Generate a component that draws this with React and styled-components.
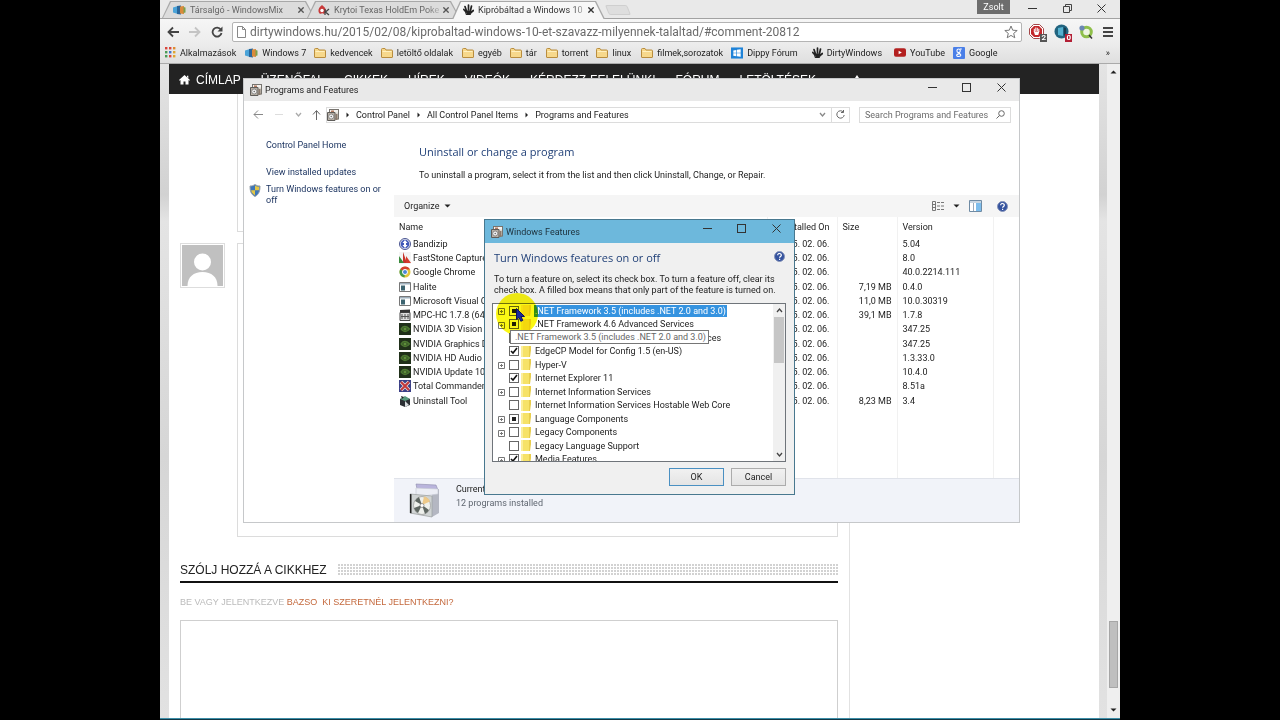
import React from "react";
import { createGlobalStyle, styled } from "styled-components";

const GlobalStyle = createGlobalStyle`
  * { box-sizing: border-box; }
  body {
    margin: 0;
    background: #000;
    font-family: Roboto, "Liberation Sans", sans-serif;
    font-size: 9px;
    line-height: 12px;
    color: #222;
  }
  button, input, textarea { font: inherit; color: inherit; margin: 0; padding: 0; }
  button { border: 0; background: none; }
  a { color: inherit; text-decoration: none; }
  h1, h2, p { margin: 0; font-weight: normal; }
  svg { display: block; flex: none; }
`;

const Screen = styled.div`
  position: relative;
  display: flex;
  flex-direction: column;
  width: 75%;
  height: 100vh;
  margin: 0 auto;
  overflow: hidden;
  background: #fff;
`;

/* ---------- browser ---------- */

const TabStrip = styled.div`
  display: flex;
  height: 19px;
  padding: 1px 0 0 2px;
  background: #e9e9e9;
  border-bottom: 1px solid #a2a2a2;
`;

const Tab = styled.div`
  position: relative;
  z-index: ${(p) => (p.$active ? 2 : 1)};
  display: flex;
  align-items: center;
  width: 153px;
  height: ${(p) => (p.$active ? 18 : 17)}px;
  margin-right: -8px;
  padding: 0 9px 0 11px;
  font-size: 9px;
  color: ${(p) => (p.$active ? "#333" : "#666")};

  &::before, &::after {
    content: "";
    position: absolute;
    inset: 0;
    z-index: -1;
    background: #a8a8a8;
    clip-path: polygon(0 100%, 8px 0, calc(100% - 9px) 0, 100% 100%);
  }
  &::after {
    inset: 1px 1px ${(p) => (p.$active ? -1 : 0)}px 1px;
    background: ${(p) => (p.$active ? "#f7f7f7" : "#dcdcdc")};
  }
`;

const TabTitle = styled.span`
  flex: 1;
  min-width: 0;
  margin-left: 4px;
  overflow: hidden;
  white-space: nowrap;
  mask-image: linear-gradient(90deg, #000 88%, rgba(0, 0, 0, 0.3));
`;

const TabClose = styled.button`
  display: flex;
  margin-left: 4px;
  margin-right: 2px;
`;

const NewTab = styled.button`
  width: 22px;
  height: 10px;
  margin: 4px 0 0 10px;
  background: #dedede;
  border: 1px solid #cfcfcf;
  border-radius: 2px;
  transform: skewX(22deg);
`;

const TabStripEnd = styled.div`
  display: flex;
  align-items: flex-start;
  margin-left: auto;
  margin-top: -1px;
`;

const UserButton = styled.button`
  width: 33px;
  height: 14px;
  margin-right: 18px;
  background: #6d6d6d;
  color: #fff;
`;

const CaptionButton = styled.button`
  display: flex;
  align-items: center;
  align-self: flex-start;
  justify-content: center;
  width: ${(p) => p.$w || 35}px;
  height: 16px;
`;

const Toolbar = styled.div`
  display: flex;
  align-items: center;
  height: 25px;
  padding: 0 7px;
  gap: 10px;
  background: linear-gradient(#f6f6f6, #ececec);
`;

const IconButton = styled.button`
  display: flex;
`;

const Omnibox = styled.div`
  display: flex;
  flex: 1;
  align-items: center;
  height: 20px;
  margin-left: -1px;
  margin-right: -3px;
  padding: 0 3px 0 4px;
  background: #fff;
  border: 1px solid #b4b4b4;
  border-radius: 2px;
`;

const UrlInput = styled.input`
  flex: 1;
  min-width: 0;
  margin-left: 4px;
  border: 0;
  outline: 0;
  background: none;
  font-size: 12px;
  color: #6a6a6a;
`;

const Bookmarks = styled.nav`
  display: flex;
  align-items: center;
  height: 20px;
  padding: 0 10px 2px 5px;
  background: linear-gradient(#ececec, #dfdfdf);
  border-bottom: 1px solid #aaa;
`;

const Bookmark = styled.a`
  display: flex;
  align-items: center;
  gap: 4px;
  margin-right: ${(p) => p.$gap || 8}px;
  white-space: nowrap;
`;

const More = styled.button`
  margin-left: auto;
`;

const Viewport = styled.div`
  display: flex;
  flex: 1;
  min-height: 0;
  background: linear-gradient(#e4e4e4, #d2d2d2 20%, #e4e4e4 24%, #d6d6d6 60%, #e2e2e2);
`;

const Site = styled.main`
  display: flex;
  flex: 1;
  flex-direction: column;
  min-width: 0;
  margin: 0 8px 0 9px;
  background: #fff;
  font-family: "Liberation Sans", Arial, sans-serif;
`;

const SiteNav = styled.nav`
  display: flex;
  align-items: center;
  gap: 20px;
  height: 30px;
  padding: 2px 11px 0 10px;
  background: #232323;
  color: #fff;
  font-size: 12px;
  white-space: nowrap;
  a { display: flex; align-items: center; gap: 6px; }
`;

const SiteBody = styled.div`
  display: flex;
  flex: 1;
`;

const Article = styled.div`
  display: flex;
  flex-direction: column;
  width: 681px;
  padding: 0 11px;
  border-right: 1px solid #e2e2e2;
`;

const Comment = styled.section`
  display: flex;
  gap: 12px;
  margin-bottom: ${(p) => p.$after || 0}px;
`;

const AvatarSpace = styled.div`
  width: 45px;
`;

const Avatar = styled.div`
  width: 45px;
  height: 45px;
  padding: 1px;
  border: 1px solid #ddd;
`;

const CommentBox = styled.div`
  flex: 1;
  height: ${(p) => p.$h}px;
  border: 1px solid #dcdcdc;
  border-top-width: ${(p) => (p.$open ? 0 : 1)}px;
`;

const SectionTitle = styled.h2`
  display: flex;
  align-items: center;
  gap: 11px;
  height: 25px;
  margin-top: 21px;
  border-bottom: 2px solid #111;
  font-size: 12px;
  color: #222;
`;

const Dots = styled.span`
  flex: 1;
  height: 11px;
  background: radial-gradient(circle at 1px 1px, #d2d2d2 1px, transparent 1px) 0 0 / 3px 3px;
`;

const LoginLine = styled.p`
  margin: 13px 0 12px;
  color: #bbb;
  a { color: #c4683c; }
`;

const ReplyField = styled.textarea`
  flex: 1;
  border: 1px solid #cfcfcf;
  border-bottom: 0;
  resize: none;
  outline: 0;
`;

const Scrollbar = styled.div`
  display: flex;
  flex-direction: column;
  align-items: center;
  justify-content: space-between;
  width: 13px;
  padding: 4px 0;
  background: #efefef;
`;

const Thumb = styled.div`
  width: 9px;
  height: 67px;
  margin-bottom: 18px;
  margin-top: auto;
  background: #bfbfbf;
  border: 1px solid #a6a6a6;
`;

const Taskbar = styled.div`
  height: 2px;
  background: #123644;
  border-top: 1px solid #3c8ea8;
`;

/* ---------- control panel window ---------- */

const Window = styled.section`
  position: absolute;
  left: 83px;
  top: 78px;
  display: flex;
  flex-direction: column;
  width: 777px;
  height: 445px;
  background: #fff;
  border: 1px solid #c6c8ca;
`;

const TitleBar = styled.header`
  display: flex;
  align-items: center;
  gap: 3px;
  height: 22px;
  padding-left: 6px;
  background: #e9e9e9;
  h1 { flex: 1; font-size: 9px; }
`;

const TitleButtons = styled.div`
  display: flex;
  align-self: flex-start;
  padding-right: ${(p) => p.$end || 0}px;
`;

const AddressRow = styled.div`
  display: flex;
  align-items: center;
  gap: 9px;
  height: 27px;
  padding: 0 8px 0 9px;
`;

const HistoryButtons = styled.div`
  display: flex;
  align-items: center;
  gap: 10px;
  width: 67px;
`;

const AddressBar = styled.div`
  display: flex;
  flex: 1;
  align-items: center;
  gap: 5px;
  height: 16px;
  margin-left: -3px;
  border: 1px solid #dcdcdc;
`;

const Crumb = styled.span`
  margin-right: ${(p) => (p.$last ? "auto" : 0)};
`;

const Refresh = styled.button`
  display: flex;
  align-items: center;
  justify-content: center;
  width: 18px;
  height: 14px;
  border-left: 1px solid #dcdcdc;
`;

const Search = styled.label`
  display: flex;
  align-items: center;
  width: 152px;
  height: 16px;
  padding: 0 5px;
  border: 1px solid #dcdcdc;
  input {
    flex: 1;
    min-width: 0;
    border: 0;
    outline: 0;
  }
  input::placeholder { color: #6b6b6b; opacity: 1; }
`;

const WindowBody = styled.div`
  display: flex;
  flex: 1;
  min-height: 0;
`;

const SidePanel = styled.aside`
  display: flex;
  flex-direction: column;
  width: 150px;
  padding: 12px 12px 0 5px;
  color: #1d3561;
`;

const SideLink = styled.a`
  display: flex;
  gap: 5px;
  min-height: 12px;
  margin-bottom: ${(p) => p.$after || 0}px;
  padding-left: ${(p) => (p.$icon ? 0 : 17)}px;
  line-height: 11px;
`;

const MainPanel = styled.div`
  display: flex;
  flex: 1;
  flex-direction: column;
  min-width: 0;
`;

const Intro = styled.div`
  height: 67px;
  padding: 17px 25px 0;
  p { margin-top: 10px; }
`;

const Heading = styled.h2`
  font-family: "Open Sans", sans-serif;
  font-size: 11px;
  line-height: 14px;
  color: #1f3f77;
`;

const CommandBar = styled.div`
  display: flex;
  align-items: center;
  height: 22px;
  padding: 0 11px 0 10px;
  background: #f5f5f5;
`;

const Organize = styled.button`
  display: flex;
  align-items: center;
  gap: 5px;
  margin-right: auto;
`;

const ViewButtons = styled.div`
  display: flex;
  align-items: center;
  gap: 9px;
`;

const HelpButton = styled(IconButton)`
  margin-left: 6px;
`;

const ListArea = styled.div`
  flex: 1;
  min-height: 0;
`;

const Programs = styled.table`
  width: 100%;
  height: 100%;
  border-collapse: collapse;
  table-layout: fixed;
  white-space: nowrap;

  th, td {
    padding: 0 5px;
    border-right: 1px solid #f1f1f1;
    font-weight: normal;
    text-align: left;
    overflow: hidden;
  }
  th:last-child, td:last-child { border-right: 0; }
  thead tr { height: 20px; }
  th:nth-child(2), td:nth-child(2) { text-align: right; padding-right: 7px; }
  td:nth-child(3) { text-align: right; }
`;

const Column = styled.col`
  width: ${(p) => p.$w}px;
`;

const ProgramRow = styled.tr`
  height: 14px;
  &:nth-child(4n) { height: 15px; }
`;

const ProgramName = styled.span`
  display: flex;
  align-items: center;
  gap: 2px;
`;

const StatusBar = styled.footer`
  display: flex;
  gap: 11px;
  height: 44px;
  padding: 4px 14px;
  background: #f1f3f9;
  border-top: 1px solid #e0e3ea;
  p { margin-bottom: 2px; }
  p + p { color: #5f6670; }
`;

/* ---------- features dialog ---------- */

const Dialog = styled.section`
  position: absolute;
  left: 324px;
  top: 219px;
  width: 311px;
  height: 276px;
  display: flex;
  flex-direction: column;
  background: #f0f0f0;
  border: 1px solid #48788f;
`;

const DialogTitle = styled(TitleBar)`
  height: 23px;
  background: #6db8dc;
  color: #1c2f3a;
`;

const DialogBody = styled.div`
  display: flex;
  flex: 1;
  flex-direction: column;
  padding: 8px 8px 8px 7px;
`;

const DialogHead = styled.div`
  display: flex;
  justify-content: space-between;
  padding: 0 1px 0 2px;
`;

const Hint = styled.p`
  padding: 9px 0 0 2px;
  line-height: 11px;
`;

const FeatureBox = styled.div`
  display: flex;
  height: 159px;
  margin-top: 7px;
  overflow: hidden;
  background: #fff;
  border: 1px solid #6f747a;
`;

const FeatureList = styled.ul`
  flex: 1;
  display: grid;
  grid-template-rows: repeat(12, 1fr);
  height: 162px;
  margin: 0;
  padding: 0 0 0 4px;
  list-style: none;
`;

const Feature = styled.li`
  display: grid;
  grid-template-columns: 12px 12px 1fr;
  align-items: center;
`;

const Expander = styled.button`
  display: flex;
  width: 7px;
  margin-left: 1px;
  margin-top: 2px;
`;

const CheckBox = styled.input`
  appearance: none;
  width: 10px;
  height: 10px;
  background: ${(p) => (p.$partial ? "linear-gradient(#222, #222) center / 4px 4px no-repeat #fff" : "#fff")};
  border: 1px solid #666;
  &:checked {
    background: url("data:image/svg+xml,%3Csvg xmlns='http://www.w3.org/2000/svg' viewBox='0 0 8 8'%3E%3Cpath d='M1 4l2 2 4-5' fill='none' stroke='%23111' stroke-width='1.6'/%3E%3C/svg%3E") #fff;
  }
`;

const FeatureLabel = styled.label`
  display: flex;
  align-items: center;
  gap: 3px;
  white-space: nowrap;
`;

const FeatureText = styled.span`
  padding: 0 1px;
  background: ${(p) => (p.$selected ? "#3593e0" : "none")};
  color: ${(p) => (p.$selected ? "#fff" : "#222")};
`;

const MiniScroll = styled.div`
  display: flex;
  flex-direction: column;
  align-items: center;
  width: 12px;
  padding: 3px 0;
  background: #f0f0f0;
  &::before {
    content: "";
    order: 1;
    width: 10px;
    height: 46px;
    margin-top: 3px;
    background: #c6c6c6;
  }
  svg:last-child { order: 2; margin-top: auto; }
`;

const DialogButtons = styled.div`
  display: flex;
  justify-content: flex-end;
  gap: 7px;
  margin-top: 6px;
`;

const PushButton = styled.button`
  width: 55px;
  height: 18px;
  background: linear-gradient(#f1f1f1, #e4e4e4);
  border: 1px solid ${(p) => (p.$main ? "#4a90c2" : "#acacac")};
`;

const ClickHalo = styled.div`
  position: absolute;
  left: 336px;
  top: 293px;
  width: 42px;
  height: 42px;
  border-radius: 50%;
  background: #fbf714;
  mix-blend-mode: multiply;
  pointer-events: none;
`;

const Tooltip = styled.div`
  position: absolute;
  left: 350px;
  top: 330px;
  padding: 0 2px 0 4px;
  background: #fff;
  border: 1px solid #767676;
  color: #666;
  white-space: nowrap;
`;

const Pointer = styled.svg`
  position: absolute;
  left: 356px;
  top: 308px;
`;

/* ---------- icons ---------- */

const Cross = ({ size = 9, width = 1, color = "#333" }) => (
  <svg width={size} height={size} viewBox="0 0 9 9">
    <path d="M.5.5l8 8M8.5.5l-8 8" stroke={color} strokeWidth={width} />
  </svg>
);

const Minimize = () => (
  <svg width="9" height="9" viewBox="0 0 9 9"><path d="M0 4.500h9" stroke="#333" /></svg>
);

const Maximize = () => (
  <svg width="9" height="9" viewBox="0 0 9 9"><rect x=".5" y=".5" width="8" height="8" fill="none" stroke="#333" /></svg>
);

const Restore = () => (
  <svg width="9" height="9" viewBox="0 0 9 9" fill="none" stroke="#444">
    <path d="M.5 2.500h6v6h-6zM2.500 2.500v-2h6v6h-2" />
  </svg>
);

const Chevron = ({ up, color = "#444", size = 7 }) => (
  <svg width={size} height={size} viewBox="0 0 7 7">
    <path d={up ? "M1 5l2.500-3L6 5" : "M1 2l2.500 3L6 2"} fill="none" stroke={color} strokeWidth="1.300" />
  </svg>
);

const Triangle = ({ dir = "down", color = "#222" }) => {
  const shapes = { down: "M.5 2.500h6L3.500 5.500z", up: "M.5 5.500h6L3.500 2.500z", right: "M2.500 1.500v5l2.500-2.500z" };
  return <svg width="7" height="8" viewBox="0 0 7 8"><path d={shapes[dir]} fill={color} /></svg>;
};

const Folder = () => (
  <svg width="12" height="10" viewBox="0 0 12 10">
    <path d="M.5 9V1.500Q.5.5 1.500.5H4l1 1.500h5.500q1 0 1 1V9q0 .5-.5.5H1Q.5 9.500.5 9z" fill="#f7d88b" stroke="#b98d3e" />
    <path d="M1.500 3.500h9" stroke="#fff0bf" />
  </svg>
);

const Apps = () => (
  <svg width="11" height="11" viewBox="0 0 11 11">
    {["#d9453b", "#d9453b", "#e08b30", "#4a9b56", "#3f74c9", "#e0a530", "#4a9b56", "#d9453b", "#e0a530"].map((c, i) => (
      <rect key={i} x={(i % 3) * 4} y={Math.floor(i / 3) * 4} width="2.400" height="2.400" fill={c} />
    ))}
  </svg>
);

const WinMix = () => (
  <svg width="13" height="10" viewBox="0 0 13 10">
    <path d="M0 2.500L5 1v8L0 7.500z" fill="#4aa3d8" />
    <path d="M4 1l4-.5v9L4 9z" fill="#29659a" />
    <path d="M7 1.500l4-.5v8l-4-.5z" fill="#d98a3c" />
    <path d="M10.500 2l2 .5v5l-2 .5z" fill="#7ca04b" />
  </svg>
);

const Hand = () => (
  <svg width="11" height="12" viewBox="0 0 11 12" fill="none" stroke="#222" strokeLinecap="round">
    <path d="M3.500 7L2 2.500M5.500 6V1M7.500 6.500L8.500 2M3 8L.8 5.500M8 8.500l2.400-2" strokeWidth="1.700" />
    <path d="M3 7h5l-.5 3.500h-4z" fill="#222" />
  </svg>
);

const PokerIcon = () => (
  <svg width="12" height="12" viewBox="0 0 12 12">
    <path d="M4 1C1.500 3 0 5 .5 7.500S3 10.500 4 9c1.500 1.500 4 .5 4-2S6.500 3 4 1z" fill="#c93a3a" />
    <circle cx="4" cy="6.500" r="1.700" fill="#fff" />
    <path d="M7 5v6M11 5L7.500 8 11 11" stroke="#444" strokeWidth="1.300" fill="none" />
  </svg>
);

const WinLogo = () => (
  <svg width="12" height="12" viewBox="0 0 13 12">
    <rect width="13" height="12" fill="#1f83d8" />
    <path d="M2.500 3.200l3.300-.5v3h-3.300zM6.500 2.600l4-.6v3.700h-4zM2.500 6.400h3.300v3l-3.300-.5zM6.500 6.400h4v3.700l-4-.6z" fill="#fff" />
  </svg>
);

const YouTube = () => (
  <svg width="12" height="9" viewBox="0 0 13 9">
    <rect width="13" height="9" rx="2" fill="#b3201f" /><path d="M5 2.500v4l3.500-2z" fill="#fff" />
  </svg>
);

const GoogleG = () => (
  <svg width="12" height="12" viewBox="0 0 12 12">
    <rect width="12" height="12" rx="1" fill="#4a7fe8" />
    <g fill="none" stroke="#fff" strokeWidth="1.100"><ellipse cx="5.600" cy="3.800" rx="1.700" ry="1.800" /><path d="M7 2h1.800M5.600 5.600c0 1 2.200 1 2.200 2.600S3.700 10 3.700 8.400 5.600 7 6.500 7.200" /></g>
  </svg>
);

const Badged = styled.span`
  position: relative;
  display: flex;
  width: 15px;
`;

const Badge = styled.span`
  position: absolute;
  right: -3px;
  bottom: -3px;
  padding: 0 1px;
  background: ${(p) => p.$bg};
  color: #fff;
  font-size: 8px;
  font-weight: bold;
  line-height: 8px;
`;

const ProgramsIcon = () => (
  <svg width="12" height="12" viewBox="0 0 12 12">
    <rect x="2.500" y=".5" width="9" height="9.500" fill="#d9d5ce" stroke="#77746f" />
    <path d="M3 1h8v2.500H3z" fill="#f4f2ee" />
    <path d="M4 2.200h3" stroke="#a05a3c" strokeWidth="1.200" />
    <path d="M.5 3.500h7.500v8H.5z" fill="#b9b1a6" stroke="#5f5d5a" />
    <circle cx="4.200" cy="7.500" r="2.500" fill="#f3f3f3" stroke="#777" strokeWidth=".8" />
    <circle cx="4.200" cy="7.500" r=".7" fill="#555" />
    <path d="M8.500 5h2v6h-2z" fill="#8b7a6c" />
  </svg>
);

const Shield = () => (
  <svg width="12" height="13" viewBox="0 0 12 13">
    <path d="M6 .5c1.500 1 3.300 1.500 5 1.500 0 5-1 8.500-5 10.500C2 10.500 1 7 1 2c1.700 0 3.500-.5 5-1.500z" fill="#3d76b8" stroke="#9aa1a9" />
    <path d="M6 1.500c1.200.8 2.700 1.200 4.200 1.300 0 1.300 0 2.500-.3 3.500H6zM6 6.300v5C3.500 10 2.500 8.500 2.100 6.300z" fill="#e3c646" />
  </svg>
);

const Help = () => (
  <svg width="11" height="11" viewBox="0 0 11 11">
    <circle cx="5.500" cy="5.500" r="5" fill="#34529e" stroke="#8593b8" />
    <path d="M3.700 4.200c0-2.400 3.700-2.200 3.600 0 0 1.300-1.700 1.200-1.700 2.600M5.600 7.800v1.200" fill="none" stroke="#fff" strokeWidth="1.200" />
  </svg>
);

const Home = () => (
  <svg width="11" height="10" viewBox="0 0 11 10">
    <path d="M5.500 0L11 5l-.7.700L9.500 5v4.500h-3v-3h-2v3h-3V5l-.8.700L0 5zM8 .8h1.300v2.500L8 2z" fill="#fff" />
  </svg>
);

const Person = () => (
  <svg width="41" height="41" viewBox="0 0 41 41">
    <rect width="41" height="41" fill="#c0c0c0" />
    <circle cx="20.500" cy="17" r="8.500" fill="#fff" />
    <path d="M5.500 41c0-9 6-14 15-14s15 5 15 14z" fill="#fff" />
  </svg>
);

const Cd = () => (
  <svg width="37" height="36" viewBox="0 0 37 36">
    <path d="M8 1l20 1 2 5-21-1z" fill="#b9b4dc" stroke="#8d8cab" strokeWidth=".6" />
    <path d="M24 8l7-2v24l-7 4z" fill="#b4b7c2" />
    <path d="M8 5l22 1v5l-22 3z" fill="#eceef5" stroke="#c5c7d2" strokeWidth=".6" />
    <path d="M2 11l22 2v21L2 30z" fill="#d0d4d4" stroke="#9a9d9d" strokeWidth=".7" />
    <path d="M2 11l1.500.2v19L2 30z" fill="#222" />
    <ellipse cx="14" cy="22.500" rx="8.500" ry="9" fill="#eef0ec" stroke="#999" strokeWidth=".7" />
    <path d="M14 22l-7-4a9 9 0 0 1 4-4zM14 22l7 5a9 9 0 0 1-4 4zM14 22l-4 8a8 8 0 0 1-4-5z" fill="#5f6762" />
    <path d="M14 22l2-8.500a8 8 0 0 1 6 5z" fill="#edc98a" />
    <circle cx="14" cy="22.500" r="2" fill="#fff" stroke="#777" strokeWidth=".7" />
  </svg>
);

const FeatureFolder = ({ pale }) => (
  <svg width="10" height="11" viewBox="0 0 10 11">
    <path d="M0 0h9v11H0z" fill={pale ? "#f8dfae" : "#f6e268"} />
    <path d="M0 0h2v11H0z" fill={pale ? "#fae8c4" : "#fbee9a"} />
    <path d="M8 0h2v4L9 11H8z" fill={pale ? "#f0d294" : "#e8cd4c"} />
  </svg>
);

const appIcons = {
  bandizip: (
    <><circle cx="6" cy="6" r="5.500" fill="#e8ecf8" stroke="#4a5590" /><circle cx="6" cy="6" r="4.300" fill="#3f58b8" /><path d="M6 2l2.500 3H7v2h1.500L6 10 3.500 7H5V5H3.500z" fill="#fff" /></>
  ),
  faststone: (
    <><path d="M0 0h12v12H0z" fill="#f4f4f4" /><path d="M4 0l4 11H4z" fill="#c7332a" /><path d="M0 4l5 7H0z" fill="#3a8b3c" /><path d="M7 4l5 7H7z" fill="#d43a2a" /></>
  ),
  chrome: (
    <>
      <circle cx="6" cy="6" r="5.500" fill="#e3c53a" />
      <path d="M6 6L1.200 3.300A5.500 5.500 0 0 1 11 3.500H6z" fill="#d3402f" />
      <path d="M6 6L1.200 3.300A5.500 5.500 0 0 0 5.500 11.500z" fill="#43984a" />
      <circle cx="6" cy="6" r="2.500" fill="#4b86d8" stroke="#fff" />
    </>
  ),
  app: (
    <><path d="M.5 1.500h11v9H.5z" fill="#fff" stroke="#777" /><path d="M1 2h10v1.500H1z" fill="#9fb0bd" /><path d="M2 4.500h4v5H2z" fill="#3c6470" /></>
  ),
  mpc: (
    <><path d="M1 3.500h10v8H1z" fill="#ddd" stroke="#444" /><path d="M1 1l10-.5V3L1 3.500z" fill="#333" /><path d="M3 5v5M6 5v5M9 5v5M2 7.500h8" stroke="#555" /></>
  ),
  nvidia: (
    <><path d="M0 0h12v12H0z" fill="#20301a" /><path d="M2 6c2-4 6-3 8.500 0C8 9.500 4 9.500 2 6z" fill="#3d5f2a" stroke="#4e7a32" strokeWidth="1.200" /><circle cx="6" cy="6" r="1.300" fill="#5f8e3a" /></>
  ),
  total: (
    <><path d="M0 0h12v12H0z" fill="#3b3f86" /><path d="M2 2l8 8M10 2l-8 8" stroke="#e8dede" strokeWidth="3.500" /><path d="M2 2l8 8M10 2l-8 8" stroke="#c43838" strokeWidth="2" /></>
  ),
  uninstall: (
    <><path d="M1 4l5-2 5 2v6l-5 2-5-2z" fill="#2b2f33" /><path d="M1 4l5 2 5-2-5-3z" fill="#5a9a7d" /><path d="M6 6v6l4-2z" fill="#d9dde0" /><path d="M2 1l3 1-2 2z" fill="#222" /></>
  ),
};

const AppIcon = ({ kind }) => (
  <svg width="12" height="12" viewBox="0 0 12 12">{appIcons[kind]}</svg>
);

/* ---------- data ---------- */

const bookmarks = [
  ["Alkalmazások", <Apps />, 9],
  ["Windows 7", <WinMix />, 8],
  ["kedvencek", <Folder />],
  ["letöltő oldalak", <Folder />, 9],
  ["egyéb", <Folder />],
  ["tár", <Folder />, 9],
  ["torrent", <Folder />],
  ["linux", <Folder />, 10],
  ["filmek,sorozatok", <Folder />],
  ["Dippy Fórum", <WinLogo />, 14],
  ["DirtyWindows", <Hand />, 12],
  ["YouTube", <YouTube />],
  ["Google", <GoogleG />],
];

const menu = ["ÜZENŐFAL", "CIKKEK", "HÍREK", "VIDEÓK", "KÉRDEZZ-FELELÜNK!", "FÓRUM", "LETÖLTÉSEK"];

const programs = [
  ["Bandizip", "bandizip", "", "5.04"],
  ["FastStone Capture", "faststone", "", "8.0"],
  ["Google Chrome", "chrome", "", "40.0.2214.111"],
  ["Halite", "app", "7,19 MB", "0.4.0"],
  ["Microsoft Visual C", "app", "11,0 MB", "10.0.30319"],
  ["MPC-HC 1.7.8 (64", "mpc", "39,1 MB", "1.7.8"],
  ["NVIDIA 3D Vision", "nvidia", "", "347.25"],
  ["NVIDIA Graphics D", "nvidia", "", "347.25"],
  ["NVIDIA HD Audio", "nvidia", "", "1.3.33.0"],
  ["NVIDIA Update 10", "nvidia", "", "10.4.0"],
  ["Total Commander", "total", "", "8.51a"],
  ["Uninstall Tool", "uninstall", "8,23 MB", "3.4"],
];

const features = [
  { name: ".NET Framework 3.5 (includes .NET 2.0 and 3.0)", state: "partial", open: true, selected: true, pale: true },
  { name: ".NET Framework 4.6 Advanced Services", state: "partial", open: true, pale: true },
  { name: "Active Directory Lightweight Directory Services" },
  { name: "EdgeCP Model for Config 1.5 (en-US)", state: "on" },
  { name: "Hyper-V", open: true },
  { name: "Internet Explorer 11", state: "on" },
  { name: "Internet Information Services", open: true },
  { name: "Internet Information Services Hostable Web Core" },
  { name: "Language Components", state: "partial", open: true },
  { name: "Legacy Components", open: true },
  { name: "Legacy Language Support" },
  { name: "Media Features", state: "on", open: true },
];

/* ---------- parts ---------- */

function Browser() {
  return (
    <>
      <TabStrip>
        <Tab>
          <WinMix />
          <TabTitle>Társalgó - WindowsMix</TabTitle>
          <TabClose aria-label="Close tab"><Cross size={6} width={2} color="#555" /></TabClose>
        </Tab>
        <Tab>
          <PokerIcon />
          <TabTitle>Krytoi Texas HoldEm Poke</TabTitle>
          <TabClose aria-label="Close tab"><Cross size={6} width={2} color="#555" /></TabClose>
        </Tab>
        <Tab $active>
          <Hand />
          <TabTitle>Kipróbáltad a Windows 10</TabTitle>
          <TabClose aria-label="Close tab"><Cross size={6} width={2} /></TabClose>
        </Tab>
        <NewTab aria-label="New tab" />
        <TabStripEnd>
          <UserButton>Zsolt</UserButton>
          <CaptionButton $w={9} aria-label="Minimize"><Minimize /></CaptionButton>
          <CaptionButton $w={60} aria-label="Restore"><Restore /></CaptionButton>
          <CaptionButton $w={9} aria-label="Close"><Cross /></CaptionButton>
          <CaptionButton $w={14} as="span" />
        </TabStripEnd>
      </TabStrip>
      <Toolbar>
        <IconButton aria-label="Back">
          <svg width="12" height="12" viewBox="0 0 12 12"><path d="M6 1.500L1.500 6 6 10.500M2 6h10" fill="none" stroke="#444" strokeWidth="1.800" /></svg>
        </IconButton>
        <IconButton aria-label="Forward">
          <svg width="12" height="12" viewBox="0 0 12 12"><path d="M6 1.500L10.500 6 6 10.500M10 6H0" fill="none" stroke="#c4c4c4" strokeWidth="1.800" /></svg>
        </IconButton>
        <IconButton aria-label="Reload">
          <svg width="12" height="12" viewBox="0 0 12 12"><path d="M9.800 3.500A4.500 4.500 0 1 0 10.500 7" fill="none" stroke="#444" strokeWidth="1.800" /><path d="M11.500.5v5h-5z" fill="#444" /></svg>
        </IconButton>
        <Omnibox>
          <svg width="9" height="12" viewBox="0 0 9 12"><path d="M.5.5h5l3 3v8h-8zM5.500.5v3h3" fill="#fff" stroke="#888" /></svg>
          <UrlInput aria-label="Address" defaultValue="dirtywindows.hu/2015/02/08/kiprobaltad-windows-10-et-szavazz-milyennek-talaltad/#comment-20812" />
          <IconButton aria-label="Bookmark this page">
            <svg width="14" height="14" viewBox="0 0 14 14"><path d="M7 1l1.700 4.200 4.500.3-3.500 2.900 1.100 4.400L7 10.400l-3.800 2.400 1.100-4.400L.8 5.500l4.500-.3z" fill="#fff" stroke="#777" /></svg>
          </IconButton>
        </Omnibox>
        <Badged>
          <svg width="15" height="15" viewBox="0 0 15 15"><path d="M4.500.5h6l4 4v6l-4 4h-6l-4-4v-6z" fill="#fff" stroke="#a5484a" /><path d="M5 2h5l3 3v5l-3 3H5l-3-3V5z" fill="#c3272b" /><path d="M5.300 8V4.800M6.800 7V3.500M8.300 7V3.800M9.800 8V4.800" stroke="#fff" /><path d="M4.800 7.500h5.500l-1 3.500H6z" fill="#fff" /></svg>
          <Badge $bg="#555">2</Badge>
        </Badged>
        <Badged>
          <svg width="15" height="15" viewBox="0 0 15 15"><circle cx="7.500" cy="7.500" r="7" fill="#22647f" /><path d="M4 4l5-1v9l-5-1z" fill="#54b0cf" /><path d="M10 3.500l2 .5v7l-2 .5z" fill="#173e52" /></svg>
          <Badge $bg="#b31f35">0</Badge>
        </Badged>
        <IconButton aria-label="Extension">
          <svg width="14" height="14" viewBox="0 0 14 14"><circle cx="7.500" cy="7" r="4.800" fill="#eef5e0" stroke="#8fbf4a" strokeWidth="3" /><circle cx="3" cy="3" r="2.600" fill="#6b87b4" /><path d="M10 10l3 3.500" stroke="#333" strokeWidth="1.500" /></svg>
        </IconButton>
        <IconButton aria-label="Menu">
          <svg width="10" height="10" viewBox="0 0 10 10"><path d="M0 1h10M0 5h10M0 9h10" stroke="#444" strokeWidth="2" /></svg>
        </IconButton>
      </Toolbar>
      <Bookmarks>
        {bookmarks.map(([text, icon, gap]) => (
          <Bookmark key={text} href="#" $gap={gap}>{icon}{text}</Bookmark>
        ))}
        <More>»</More>
      </Bookmarks>
    </>
  );
}

function SitePage() {
  return (
    <Viewport>
      <Site>
        <SiteNav>
          <a href="#"><Home />CÍMLAP</a>
          {menu.map((item) => <a key={item} href="#">{item}</a>)}
          <a href="#" aria-label="Account">
            <svg width="80" height="14" viewBox="0 0 80 14"><path d="M21 2l4 6h-8z" fill="#fff" /></svg>
          </a>
        </SiteNav>
        <SiteBody>
          <Article>
            <Comment $after={11}>
              <AvatarSpace />
              <CommentBox $open $h={138} />
            </Comment>
            <Comment>
              <Avatar><Person /></Avatar>
              <CommentBox $h={294} />
            </Comment>
            <SectionTitle>SZÓLJ HOZZÁ A CIKKHEZ<Dots /></SectionTitle>
            <LoginLine>
              BE VAGY JELENTKEZVE <a href="#">BAZSO</a>&nbsp; <a href="#">KI SZERETNÉL JELENTKEZNI?</a>
            </LoginLine>
            <ReplyField aria-label="Hozzászólás" />
          </Article>
        </SiteBody>
      </Site>
      <Scrollbar>
        <Triangle dir="up" />
        <Thumb />
        <Triangle />
      </Scrollbar>
    </Viewport>
  );
}

function ControlPanel() {
  return (
    <Window>
      <TitleBar>
        <ProgramsIcon />
        <h1>Programs and Features</h1>
        <TitleButtons>
          <CaptionButton $w={33} aria-label="Minimize"><Minimize /></CaptionButton>
          <CaptionButton $w={35} aria-label="Maximize"><Maximize /></CaptionButton>
          <CaptionButton $w={35} aria-label="Close"><Cross /></CaptionButton>
        </TitleButtons>
      </TitleBar>
      <AddressRow>
        <HistoryButtons>
          <IconButton aria-label="Back">
            <svg width="11" height="9" viewBox="0 0 11 9"><path d="M5 .5l-4 4 4 4M1 4.500h9" fill="none" stroke="#888" /></svg>
          </IconButton>
          <IconButton aria-label="Forward">
            <svg width="11" height="9" viewBox="0 0 11 9"><path d="M1 4.500h8" stroke="#ddd" /></svg>
          </IconButton>
          <Chevron color="#aaa" />
          <IconButton aria-label="Up">
            <svg width="9" height="10" viewBox="0 0 9 10"><path d="M1 4.500l3.500-4 3.500 4M4.500 1v9" fill="none" stroke="#666" /></svg>
          </IconButton>
        </HistoryButtons>
        <AddressBar>
          <ProgramsIcon />
          <Triangle dir="right" />
          <Crumb>Control Panel</Crumb>
          <Triangle dir="right" />
          <Crumb>All Control Panel Items</Crumb>
          <Triangle dir="right" />
          <Crumb $last>Programs and Features</Crumb>
          <Chevron color="#888" />
          <Refresh aria-label="Refresh">
            <svg width="9" height="9" viewBox="0 0 9 9"><path d="M7.300 2A3.700 3.700 0 1 0 8.200 5M7.500 0v2.500H5" fill="none" stroke="#666" /></svg>
          </Refresh>
        </AddressBar>
        <Search>
          <input placeholder="Search Programs and Features" aria-label="Search Programs and Features" />
          <svg width="9" height="9" viewBox="0 0 9 9"><circle cx="5.500" cy="3.500" r="2.800" fill="none" stroke="#666" /><path d="M3.500 5.500l-3 3" stroke="#666" /></svg>
        </Search>
      </AddressRow>
      <WindowBody>
        <SidePanel>
          <SideLink href="#" $after={15}>Control Panel Home</SideLink>
          <SideLink href="#" $after={5}>View installed updates</SideLink>
          <SideLink href="#" $icon><Shield />Turn Windows features on or off</SideLink>
        </SidePanel>
        <MainPanel>
          <Intro>
            <Heading>Uninstall or change a program</Heading>
            <p>To uninstall a program, select it from the list and then click Uninstall, Change, or Repair.</p>
          </Intro>
          <CommandBar>
            <Organize>Organize <Triangle /></Organize>
            <ViewButtons>
              <IconButton aria-label="View">
                <svg width="12" height="10" viewBox="0 0 12 10" fill="none" stroke="#777"><path d="M.5.5h3v9h-3zM.5 3.500h3M.5 6.500h3" /><path d="M5 1.500h7M5 5h7M5 8.500h7" strokeDasharray="3 1" /></svg>
              </IconButton>
              <Triangle />
              <IconButton aria-label="Preview pane">
                <svg width="13" height="12" viewBox="0 0 13 12"><path d="M.5.5h12v11H.5z" fill="#fff" stroke="#6f8ba4" /><path d="M1 1h11v2H1z" fill="#c8d6e2" /><path d="M7 3h5v8H7z" fill="#7dbdec" /><path d="M4.500 3v8" stroke="#9ab" /></svg>
              </IconButton>
              <HelpButton aria-label="Help"><Help /></HelpButton>
            </ViewButtons>
          </CommandBar>
          <ListArea>
            <Programs>
              <colgroup>
                <col />
                <Column $w={70} />
                <Column $w={60} />
                <Column $w={96} />
                <Column $w={26} />
              </colgroup>
              <thead>
                <tr><th>Name</th><th>Installed On</th><th>Size</th><th>Version</th><th /></tr>
              </thead>
              <tbody>
                {programs.map(([name, icon, size, version]) => (
                  <ProgramRow key={name}>
                    <td><ProgramName><AppIcon kind={icon} />{name}</ProgramName></td>
                    <td>2015. 02. 06.</td>
                    <td>{size}</td>
                    <td>{version}</td>
                    <td />
                  </ProgramRow>
                ))}
                <tr><td /><td /><td /><td /><td /></tr>
              </tbody>
            </Programs>
          </ListArea>
          <StatusBar>
            <Cd />
            <div>
              <p>Currently installed programs</p>
              <p>12 programs installed</p>
            </div>
          </StatusBar>
        </MainPanel>
      </WindowBody>
    </Window>
  );
}

function FeaturesDialog() {
  return (
    <Dialog>
      <DialogTitle>
        <ProgramsIcon />
        <h1>Windows Features</h1>
        <TitleButtons>
          <CaptionButton $w={33} aria-label="Minimize"><Minimize /></CaptionButton>
          <CaptionButton $w={35} aria-label="Maximize"><Maximize /></CaptionButton>
          <CaptionButton $w={35} aria-label="Close"><Cross /></CaptionButton>
        </TitleButtons>
      </DialogTitle>
      <DialogBody>
        <DialogHead>
          <Heading>Turn Windows features on or off</Heading>
          <IconButton aria-label="Help"><Help /></IconButton>
        </DialogHead>
        <Hint>
          To turn a feature on, select its check box. To turn a feature off, clear its check box. A filled box means that only part of the feature is turned on.
        </Hint>
        <FeatureBox>
          <FeatureList>
            {features.map(({ name, state, open, selected, pale }, i) => (
              <Feature key={name}>
                {open ? (
                  <Expander aria-label="Expand">
                    <svg width="7" height="7" viewBox="0 0 7 7"><path d="M.5.5h6v6h-6zM2 3.500h3M3.500 2v3" fill="none" stroke="#777" /></svg>
                  </Expander>
                ) : <span />}
                <CheckBox type="checkbox" id={`feature-${i}`} $partial={state === "partial"} defaultChecked={state === "on"} />
                <FeatureLabel htmlFor={`feature-${i}`}>
                  <FeatureFolder pale={pale} />
                  <FeatureText $selected={selected}>{name}</FeatureText>
                </FeatureLabel>
              </Feature>
            ))}
          </FeatureList>
          <MiniScroll>
            <Chevron up />
            <Chevron />
          </MiniScroll>
        </FeatureBox>
        <DialogButtons>
          <PushButton $main>OK</PushButton>
          <PushButton>Cancel</PushButton>
        </DialogButtons>
      </DialogBody>
    </Dialog>
  );
}

export default function App() {
  return (
    <>
      <GlobalStyle />
      <Screen>
        <Browser />
        <SitePage />
        <Taskbar />
        <ControlPanel />
        <FeaturesDialog />
        <ClickHalo />
        <Tooltip>.NET Framework 3.5 (includes .NET 2.0 and 3.0)</Tooltip>
        <Pointer width="9" height="14" viewBox="0 0 9 14">
          <path d="M.5.5v11l2.500-2 1.800 3.800 2-.9L5 8.500h3.500z" fill="#1c2a9c" stroke="#10155a" />
        </Pointer>
      </Screen>
    </>
  );
}
